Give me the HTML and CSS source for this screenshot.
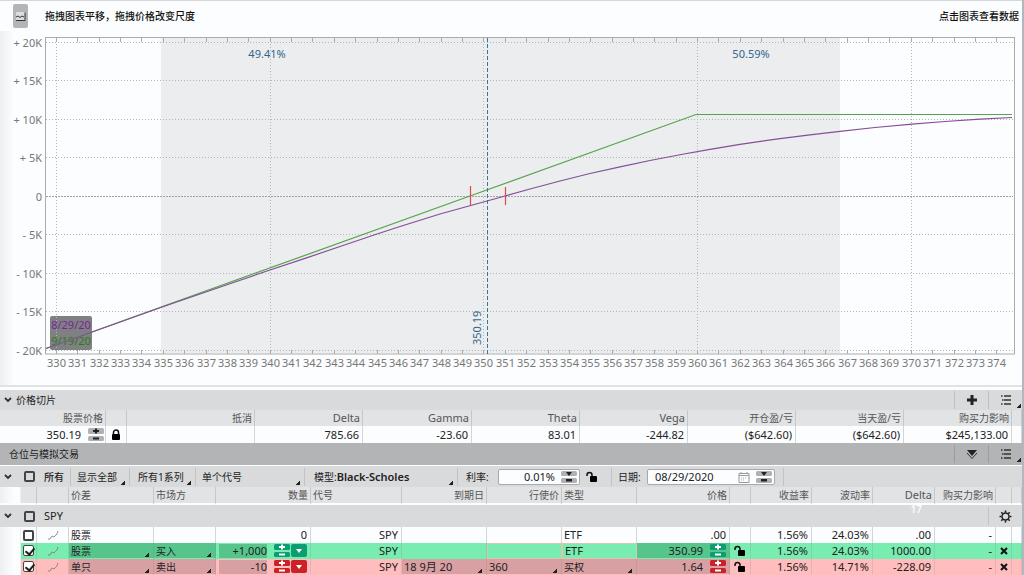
FILE: index.html
```
<!DOCTYPE html>
<html lang="zh-CN">
<head>
  <meta charset="UTF-8">
  <title>风险曲线</title>
  <link rel="stylesheet" href="styles.css">
</head>
<body>
  <!-- shared icons -->
  <svg class="defs" width="0" height="0" aria-hidden="true">
    <symbol id="chevron" viewBox="0 0 8 6"><path d="M1 1l3 3 3-3" fill="none" stroke="#333" stroke-width="1.8"/></symbol>
    <symbol id="spin" viewBox="0 0 16 14">
      <rect class="key" width="16" height="6" rx="1.5"/>
      <rect class="key" y="8" width="16" height="5" rx="1.5"/>
      <path class="sign" d="M5 3h6M8 0.5v5M5 10.5h6" fill="none" stroke-width="2"/>
    </symbol>
    <symbol id="spin-flat" viewBox="0 0 16 14">
      <rect class="key" y="1" width="16" height="5" rx="1.5"/>
      <rect class="key" y="8" width="16" height="5" rx="1.5"/>
      <path d="M5 2h6L8 6zM5 9h6v2.500H5z" fill="#222"/>
    </symbol>
    <symbol id="lock" viewBox="0 0 10 12">
      <path d="M2.500 6V3.500a2.500 2.500 0 0 1 5 0V6" fill="none" stroke="#111" stroke-width="1.500"/>
      <rect x="1" y="5" width="8" height="6" rx="1"/>
    </symbol>
    <symbol id="unlock" viewBox="0 0 12 12">
      <path d="M1 5V4a2.500 2.500 0 0 1 5 0v2" fill="none" stroke="#111" stroke-width="1.500"/>
      <rect x="4" y="5" width="7" height="6" rx="1"/>
    </symbol>
    <symbol id="list" viewBox="0 0 12 12">
      <path d="M4 2h7M4 6h7M4 10h7" stroke="#333" stroke-width="1.500"/>
      <path d="M1 2h1.500M2 6h1.500M1 10h1.500" stroke="#333" stroke-width="1.500"/>
    </symbol>
    <symbol id="spark" viewBox="0 0 12 10"><path d="M1 9h2l2-3 2 1 3-3 1-3" fill="none" stroke="#777" stroke-width="0.8"/></symbol>
    <symbol id="close" viewBox="0 0 8 8"><path d="M1 1l6 6M7 1L1 7" stroke="#111" stroke-width="2"/></symbol>
  </svg>

  <section class="chart">
    <header class="chart-head">
      <button class="pic-btn" aria-label="保存图片">
        <svg width="11" height="11" viewBox="0 0 11 11"><rect x="1" y="1" width="9" height="8" fill="#dcdddf"/><path d="M1 6l2-1 2 1.500 2-1.500 2 1M1 9.500h9V1.500" fill="none" stroke="#333"/></svg>
      </button>
      <span class="tip">拖拽图表平移，拖拽价格改变尺度</span>
      <span class="tip hint">点击图表查看数据</span>
    </header>
    <svg class="plot" viewBox="0 31 1022 354">
      <rect x="161" y="38" width="679" height="315" fill="#ecedee"/>
      <rect x="50" y="316" width="42" height="34" rx="2" fill="#7f8080"/>
      <g id="grid"></g>
      <rect x="45.500" y="37.500" width="969" height="316.500" fill="none" stroke="#aaabad"/>
      <text x="267" y="58" class="blue mid">49.41%</text>
      <text x="751" y="58" class="blue mid">50.59%</text>
      <text transform="translate(481 345) rotate(-90)" class="blue">350.19</text>
      <text x="71" y="329" class="mid purple">8/29/20</text>
      <text x="71" y="345" class="mid green">9/19/20</text>
      <polyline class="line-green" points="46,348.500 470,196 696,114.500 1012,114.500"/>
      <polyline class="line-purple" points="46,348.500 160,307.800 200,294 235,282 270,270 305,258.400 340,246.500 377,234 400,226.500 440,214 487,201 505,196 530,189 560,181 590,173.500 620,166.800 650,160.500 684,154 710,149.300 740,144.300 778,138.800 810,134.800 840,131.300 875,127.500 912,124.200 945,121.500 980,119.200 1012,117.500"/>
      <path d="M470.500 186v20M505.500 187v18" stroke="#dc4a4a" stroke-width="1.200"/>
      <path d="M487.500 38v316" stroke="#35789f" stroke-dasharray="4 2"/>
    </svg>
  </section>

  <section class="slice">
    <header class="bar">
      <svg class="chev" width="8" height="6"><use href="#chevron"/></svg>
      <h2>价格切片</h2>
      <button class="bar-btn push" aria-label="添加"><svg width="12" height="12" viewBox="0 0 12 12"><path d="M6 1v10M1 6h10" stroke="#222" stroke-width="3"/></svg></button>
      <button class="bar-btn corner" aria-label="菜单"><svg width="12" height="12"><use href="#list"/></svg></button>
    </header>
    <table>
      <colgroup>
        <col width="106"><col width="21"><col width="128"><col width="108"><col width="109"><col width="108"><col width="108"><col width="108"><col width="108"><col width="108"><col width="10">
      </colgroup>
      <thead>
        <tr><th>股票价格</th><th></th><th>抵消</th><th class="en">Delta</th><th class="en">Gamma</th><th class="en">Theta</th><th class="en">Vega</th><th>开仓盈/亏</th><th>当天盈/亏</th><th>购买力影响</th><th></th></tr>
      </thead>
      <tbody>
        <tr>
          <td><div class="field"><input type="text" value="350.19" aria-label="股票价格"><button class="spin" aria-label="调整价格"><svg width="16" height="14"><use href="#spin"/></svg></button></div></td>
          <td class="c"><button aria-label="锁定"><svg width="10" height="12"><use href="#lock"/></svg></button></td>
          <td></td><td>785.66</td><td>-23.60</td><td>83.01</td><td>-244.82</td><td>($642.60)</td><td>($642.60)</td><td>$245,133.00</td><td></td>
        </tr>
      </tbody>
    </table>
  </section>

  <section class="positions">
    <header class="bar dark">
      <h2>仓位与模拟交易</h2>
      <button class="bar-btn push" aria-label="折叠"><svg width="12" height="12" viewBox="0 0 12 12"><path d="M1 2h10L6 8z" fill="#222"/><path d="M1 5l5 5.500L11 5" fill="none" stroke="#333"/></svg></button>
      <button class="bar-btn corner" aria-label="菜单"><svg width="12" height="12"><use href="#list"/></svg></button>
    </header>

    <div class="filters">
      <label class="all"><svg class="chev" width="8" height="6"><use href="#chevron"/></svg><input type="checkbox"><b>所有</b></label>
      <select class="show" aria-label="显示"><option>显示全部</option></select>
      <select class="series" aria-label="系列"><option>所有1系列</option></select>
      <select class="symbol" aria-label="代号"><option>单个代号</option></select>
      <div class="model"><label for="model">模型:</label><select id="model"><option>Black-Scholes</option></select></div>
      <div class="rate">
        <label for="rate">利率:</label>
        <div class="box"><input type="text" id="rate" value="0.01%"><button class="spin" aria-label="调整利率"><svg width="16" height="14"><use href="#spin-flat"/></svg></button></div>
        <button aria-label="解锁"><svg width="12" height="12"><use href="#unlock"/></svg></button>
      </div>
      <div class="date">
        <label for="date">日期:</label>
        <div class="box"><input type="text" id="date" value="08/29/2020">
          <button aria-label="日历"><svg width="12" height="12" viewBox="0 0 12 12"><path d="M1 2.500h10v9H1zM1 4.500h10M3 1v2M9 1v2" fill="none" stroke="#999"/><path d="M3 7h6M3 9h4" stroke="#aaa" stroke-dasharray="1 1"/></svg></button>
          <button class="spin" aria-label="调整日期"><svg width="16" height="14"><use href="#spin-flat"/></svg></button></div>
      </div>
    </div>

    <table class="legs">
      <colgroup>
        <col width="21"><col width="16"><col width="32"><col width="85"><col width="62"><col width="95"><col width="91"><col width="85"><col width="75"><col width="75"><col width="93"><col width="21"><col width="61"><col width="61"><col width="62"><col width="61"><col width="16"><col width="10">
      </colgroup>
      <thead>
        <tr>
          <th class="edge"></th><th></th><th></th><th class="l">价差</th><th class="l">市场方</th><th>数量</th><th class="l">代号</th><th>到期日</th><th>行使价</th><th class="l">类型</th><th>价格</th><th></th><th>收益率</th><th>波动率</th><th class="en">Delta</th><th>购买力影响</th><th></th><th></th>
        </tr>
      </thead>
      <tbody>
        <tr class="group">
          <td colspan="18">
            <div class="group-head">
              <svg class="chev" width="8" height="6"><use href="#chevron"/></svg>
              <label><input type="checkbox">SPY</label>
              <span class="count">17</span>
              <button class="gear" aria-label="设置"><svg width="13" height="13" viewBox="0 0 13 13"><circle cx="6.500" cy="6.500" r="3.500" fill="none" stroke="#222" stroke-width="1.500"/><path d="M6.500 0.500v2M6.500 10.500v2M0.500 6.500h2M10.500 6.500h2M2.300 2.300l1.400 1.400M9.300 9.300l1.400 1.400M2.300 10.700l1.400-1.400M9.300 3.700l1.400-1.400" stroke="#222" stroke-width="1.600"/></svg></button>
            </div>
          </td>
        </tr>
        <tr class="plain">
          <td class="edge"></td>
          <td class="c"><input type="checkbox" aria-label="选择股票"></td>
          <td class="c"><svg width="12" height="10"><use href="#spark"/></svg></td>
          <td class="l">股票</td><td></td><td>0</td><td>SPY</td><td></td><td></td><td class="l">ETF</td><td>.00</td><td></td><td>1.56%</td><td>24.03%</td><td>.00</td><td>-</td><td></td><td></td>
        </tr>
        <tr class="buy">
          <td class="edge"></td>
          <td class="c"><input type="checkbox" checked aria-label="选择买入"></td>
          <td class="c"><svg width="12" height="10"><use href="#spark"/></svg></td>
          <td class="edit"><select aria-label="价差"><option>股票</option></select></td>
          <td class="edit"><select aria-label="市场方"><option>买入</option></select></td>
          <td><div class="field"><input class="edit" type="text" value="+1,000" aria-label="数量"><button class="spin" aria-label="调整数量"><svg width="16" height="14"><use href="#spin"/></svg></button><button class="drop" aria-label="选择数量"></button></div></td>
          <td>SPY</td><td></td><td class="outline"></td><td class="l outline">ETF</td>
          <td class="edit"><div class="field"><input type="text" value="350.99" aria-label="价格"><button class="spin" aria-label="调整价格"><svg width="16" height="14"><use href="#spin"/></svg></button></div></td>
          <td class="c"><button aria-label="解锁"><svg width="12" height="12"><use href="#unlock"/></svg></button></td>
          <td>1.56%</td><td>24.03%</td><td>1000.00</td><td>-</td>
          <td class="c"><button aria-label="删除"><svg width="8" height="8"><use href="#close"/></svg></button></td><td></td>
        </tr>
        <tr class="sell">
          <td class="edge"></td>
          <td class="c"><input type="checkbox" checked aria-label="选择卖出"></td>
          <td class="c"><svg width="12" height="10"><use href="#spark"/></svg></td>
          <td class="edit"><select aria-label="价差"><option>单只</option></select></td>
          <td class="edit"><select aria-label="市场方"><option>卖出</option></select></td>
          <td><div class="field"><input class="edit" type="text" value="-10" aria-label="数量"><button class="spin" aria-label="调整数量"><svg width="16" height="14"><use href="#spin"/></svg></button><button class="drop" aria-label="选择数量"></button></div></td>
          <td>SPY</td>
          <td class="edit"><select class="en" aria-label="到期日"><option>18 9月 20</option></select></td>
          <td class="edit"><select class="en" aria-label="行使价"><option>360</option></select></td>
          <td class="edit"><select aria-label="类型"><option>买权</option></select></td>
          <td class="edit"><div class="field"><input type="text" value="1.64" aria-label="价格"><button class="spin" aria-label="调整价格"><svg width="16" height="14"><use href="#spin"/></svg></button></div></td>
          <td class="c"><button aria-label="解锁"><svg width="12" height="12"><use href="#unlock"/></svg></button></td>
          <td>1.56%</td><td>14.71%</td><td>-228.09</td><td>-</td>
          <td class="c"><button aria-label="删除"><svg width="8" height="8"><use href="#close"/></svg></button></td><td></td>
        </tr>
      </tbody>
    </table>
  </section>

  <script>
    // Grid lines, ticks and axis labels
    const grid = document.getElementById('grid');
    let out = '';

    for (let k = 20; k >= -20; k -= 5) {
      const y = Math.floor(196 - k * 7.7) + 0.5;
      const label = k === 0 ? '0' : (k > 0 ? '+ ' : '- ') + Math.abs(k) + 'K';
      out += `<path class="${k ? 'dots' : 'dots zero'}" d="M46 ${y}H1013"/>`;
      out += `<text class="axis end" x="42" y="${y + 4}">${label}</text>`;
    }

    for (let p = 330; p <= 374; p++) {
      const x = Math.floor(56.5 + (p - 330) * 21.37) + 0.5;
      if (p % 10 === 0) out += `<path class="dots" d="M${x} 38V353"/>`;
      out += `<path class="tick" d="M${x} 38v4M${x} 350v4"/>`;
      out += `<text class="axis mid" x="${x}" y="367">${p}</text>`;
    }

    grid.innerHTML = out;
  </script>
</body>
</html>
```
FILE: styles.css
```
* {
  box-sizing: border-box;
}

body {
  margin: 0;
  border-right: 2px solid #b0b7be;
  background-color: #fcfdfe;
  color: #222;
  font: 11px/14px "Noto Sans", "Noto Sans CJK SC", sans-serif;
}

.defs {
  position: absolute;
}

svg {
  display: block;
}

button,
input,
select {
  margin: 0;
  padding: 0;
  border: none;
  background: none;
  color: inherit;
  font: inherit;
}

button {
  display: flex;
  align-items: center;
  justify-content: center;
}

h2 {
  margin: 0;
  font-size: 10px;
  font-weight: 400;
}

/* chart */
.chart {
  border-top: 1px solid #d6d7d9;
  border-bottom: 2px solid #e0e2e4;
  background: linear-gradient(90deg, #eeeff1, #fcfdfe 14px);
}

.chart-head {
  display: flex;
  align-items: center;
  height: 30px;
  padding: 0 3px 0 13px;
  background-color: #fcfdfe;
  color: #111;
  font-size: 10px;
}

.tip {
  font-family: "Noto Sans CJK TC", sans-serif;
  font-weight: 500;
}

.pic-btn {
  width: 15px;
  height: 24px;
  margin-right: 17px;
  border-radius: 2px;
  background-color: #b4b5b7;
}

.hint {
  margin-left: auto;
}

.plot {
  width: 100%;
  height: auto;
}

.plot text {
  font-size: 11px;
}

.axis { fill: #777; }
.mid { text-anchor: middle; }
.end { text-anchor: end; }
.blue { fill: #33668c; }
.purple { fill: #7d1fa0; }
.green { fill: #2b7a1d; }

.dots {
  stroke: #b4b5b7;
  stroke-dasharray: 1 2;
}

.zero {
  stroke: #a2a3a5;
  stroke-dasharray: 2 1;
}

.tick {
  stroke: #aaabad;
}

.line-green,
.line-purple {
  fill: none;
  stroke: #55a34c;
  stroke-width: 1.2;
}

.line-purple {
  stroke: #834f96;
}

/* section bars */
.slice {
  margin-top: 3px;
}

.bar {
  display: flex;
  align-items: center;
  height: 20px;
  padding-left: 4px;
  background-color: #d9dadc;
}

.chev {
  flex: none;
  margin-right: 4px;
}

.dark {
  height: 22px;
  padding-left: 9px;
  background-color: #b3b4b6;
}

.bar-btn {
  width: 34px;
  height: 18px;
  border-left: 1px solid #bfc0c2;
}

.dark .bar-btn {
  border-color: #9c9d9f;
}

.push {
  margin-left: auto;
}

.corner,
select {
  background: linear-gradient(135deg, transparent 50%, #222 50%) right 1px bottom 1px / 4px 4px no-repeat;
}

/* tables */
table {
  width: 100%;
  border-collapse: separate;
  border-spacing: 0;
  table-layout: fixed;
}

th,
td {
  height: 16px;
  padding: 0 3px;
  border-right: 1px solid #d4d5d7;
  line-height: 14px;
  text-align: right;
  white-space: nowrap;
}

th {
  padding-right: 2px;
  border-color: #c6c7c9;
  background-color: #e2e3e5;
  color: #555;
  font-size: 10px;
  font-weight: 400;
}

.en {
  font-size: 11px;
}

.l {
  text-align: left;
}

td.c {
  padding: 0;
}

.c > * {
  margin: 0 auto;
}

.slice td {
  height: 17px;
}

.slice td:first-child {
  padding-right: 1px;
}

.field {
  display: flex;
  align-items: center;
  justify-content: flex-end;
  gap: 1px;
}

.field input {
  flex: 1;
  width: 0;
  margin-right: 6px;
  height: 14px;
  text-align: right;
}

.spin {
  flex: none;
  --key: #b0b1b3;
  --sign: #222;
}

.key { fill: var(--key); }
.sign { stroke: var(--sign); }

/* filters */
.filters {
  display: flex;
  align-items: center;
  height: 22px;
  border-top: 1px solid #fcfdfe;
  background-color: #d9dadc;
  font-size: 10px;
}

.filters > * {
  height: 18px;
  border-right: 1px solid #c2c3c5;
}

.all,
.model,
.rate,
.date {
  display: flex;
  align-items: center;
}

.all {
  width: 71px;
  padding-left: 4px;
}

.all b {
  margin-left: 9px;
  font-weight: 500;
}

.show {
  width: 59px;
  padding-left: 6px;
}

.series {
  width: 66px;
  padding-left: 8px;
}

.symbol {
  width: 109px;
  padding-left: 6px;
}

select {
  appearance: none;
  border-radius: 0;
  background-position: right 4px bottom 1px;
}

.model {
  width: 153px;
  padding-left: 9px;
}

.model select {
  flex: 1;
  height: 18px;
  font-size: 11px;
  font-weight: 600;
}

.rate {
  width: 154px;
  padding-left: 8px;
}

.date {
  width: 172px;
  padding-left: 6px;
}

.box {
  display: flex;
  align-items: center;
  gap: 6px;
  height: 16px;
  margin: 0 6px 0 auto;
  padding: 0 2px;
  border: 1px solid #a8a9ab;
  border-radius: 2px;
  background-color: #fcfdfe;
}

.rate .box {
  width: 82px;
}

.rate > button {
  margin-right: 13px;
}

.date .box {
  width: 128px;
  margin-right: 8px;
  padding-left: 7px;
}

.box input {
  flex: 1;
  width: 0;
  font-size: 11px;
}

.rate input {
  text-align: right;
}

input[type="checkbox"] {
  appearance: none;
  display: block;
  position: relative;
  width: 11px;
  height: 11px;
  border: 2px solid #444;
  border-radius: 2px;
}

.all input {
  margin-left: 8px;
}

input[type="checkbox"]:checked {
  border-width: 1px;
  background-color: #fff;
}

input[type="checkbox"]:checked::after {
  content: "";
  position: absolute;
  left: 3px;
  top: 0;
  width: 4px;
  height: 7px;
  border: solid #222;
  border-width: 0 2px 2px 0;
  transform: rotate(40deg);
}

/* legs */
.legs th {
  height: 18px;
  border-bottom: 2px solid #fcfdfe;
}

.l {
  padding-left: 2px;
}

.legs .edge {
  border-right-color: transparent;
  background: linear-gradient(90deg, #eeeff1, #fcfdfe 14px);
}

.group td {
  height: 22px;
  padding: 0;
  border: none;
  background-color: #d9dadc;
}

.group-head {
  display: flex;
  align-items: center;
  position: relative;
  height: 22px;
  padding-left: 4px;
}

.group-head label {
  display: flex;
  align-items: center;
  gap: 9px;
  margin-left: 8px;
}

.count {
  position: absolute;
  right: 100px;
  top: -3px;
  color: #fcfdfe;
  font-size: 10px;
  font-weight: 600;
}

.gear {
  width: 34px;
  height: 18px;
  margin-left: auto;
  border-left: 1px solid #c2c3c5;
}

.plain .l,
.legs select {
  font-size: 10px;
}

.legs select.en,
.plain td:nth-child(10) {
  font-size: 11px;
}

.legs select {
  display: block;
  width: 100%;
  height: 15px;
  padding-left: 2px;
  background-position: right 1px bottom 1px;
}

.buy,
.sell {
  --light: #79ecb1;
  --dark: #55c58b;
  --key: #0c9d72;
}

.sell {
  --light: #ffbdbd;
  --dark: #d8a0a2;
  --key: #cc2127;
}

.buy td:not(.edge),
.sell td:not(.edge) {
  padding-top: 0;
  padding-bottom: 0;
  border-right-color: rgba(130, 130, 130, 0.2);
  border-bottom: 1px solid var(--light);
  background-color: var(--light);
}

.buy td.edit,
.sell td.edit {
  padding-left: 0;
  background-color: var(--dark);
}

input.edit {
  background-color: var(--dark);
}

.legs .spin {
  --key: inherit;
  --sign: #fff;
}

.buy td.outline {
  border: 1px solid #d9c8ac;
}

.drop {
  width: 16px;
  height: 13px;
  border-radius: 2px;
  background-color: var(--key);
}

.drop::after {
  content: "";
  border: 3px solid transparent;
  border-top: 4px solid #fff;
  border-bottom: none;
}
```
